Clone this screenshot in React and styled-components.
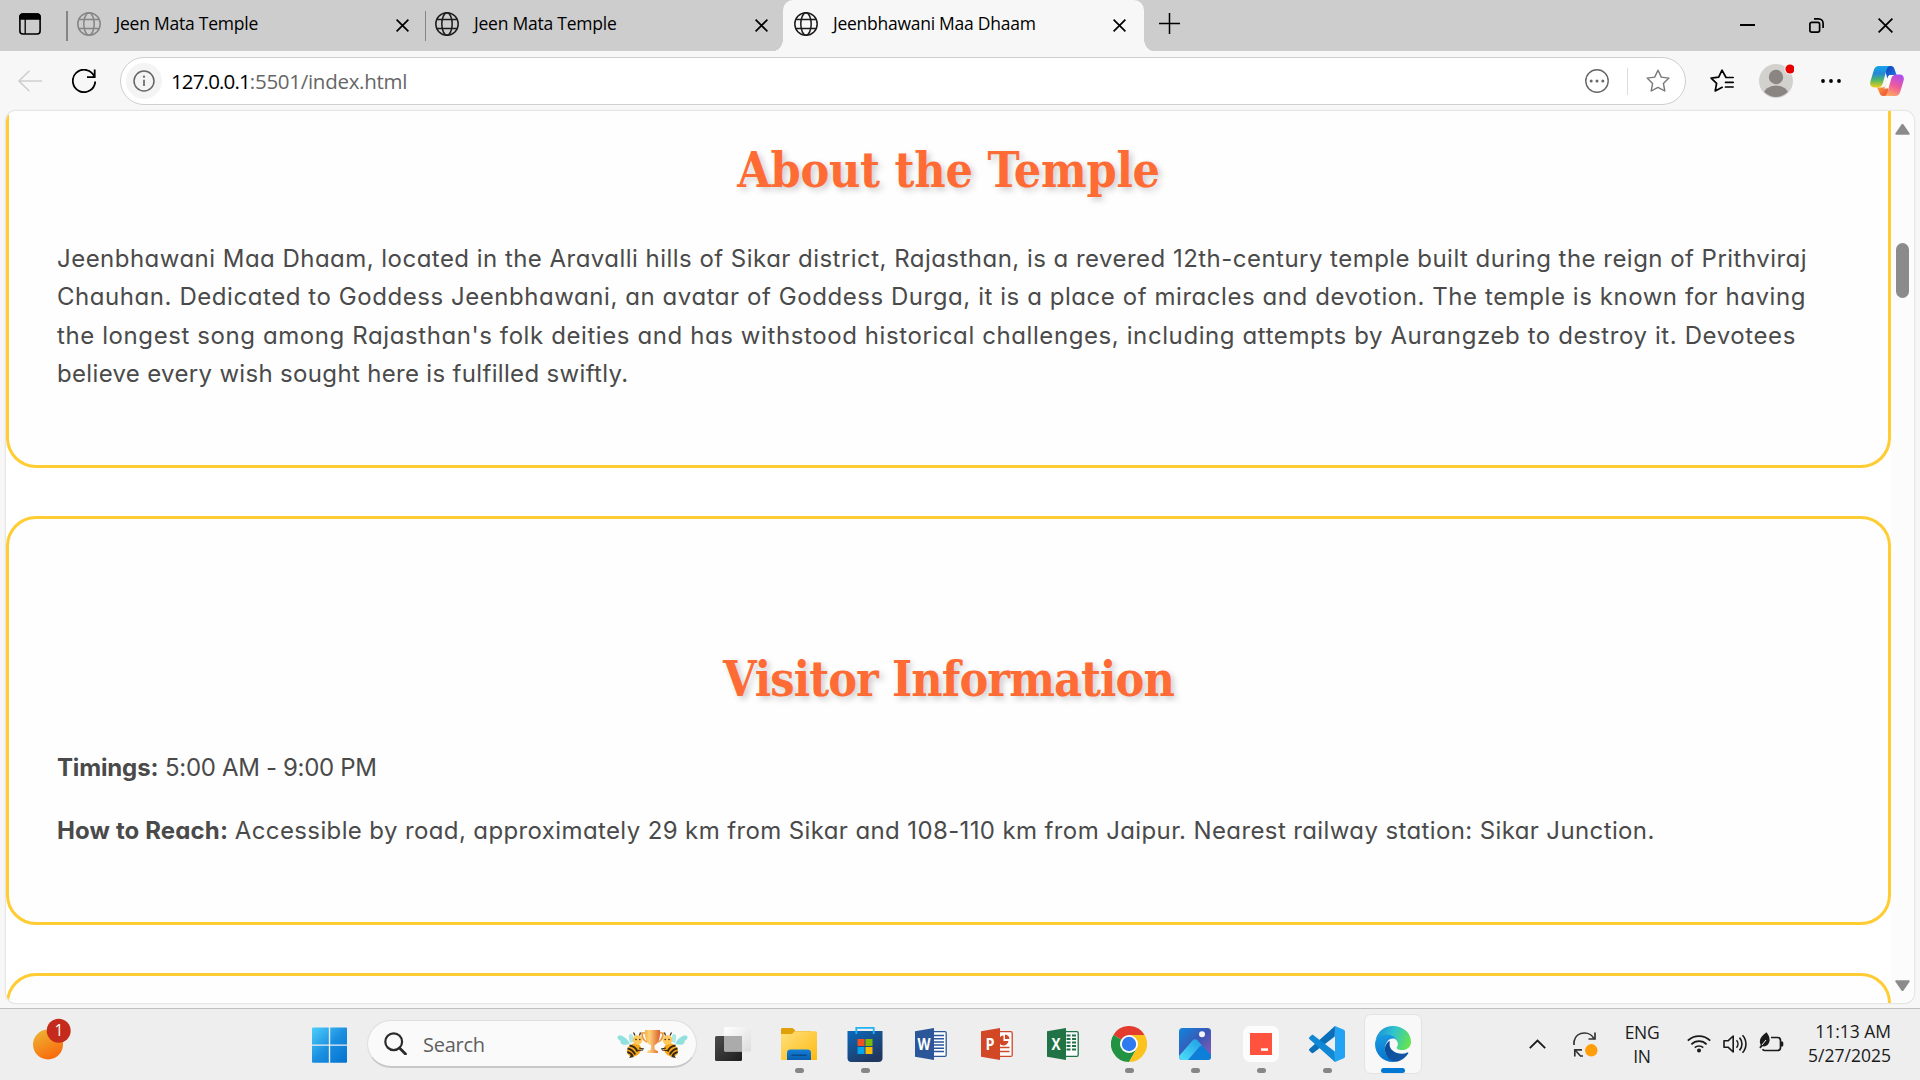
import React from "react";
import styled, { createGlobalStyle, css } from "styled-components";

const UI = `"Open Sans", "Noto Sans", sans-serif`;

const Global = createGlobalStyle`
  *, *::before, *::after { box-sizing: border-box; }
  html, body { margin: 0; padding: 0; background: #eee; overflow: hidden; }
  svg { display: block; flex: none; }
`;

const Screen = styled.div`
  width: 1920px;
  height: 1080px;
  display: flex;
  flex-direction: column;
  overflow: hidden;
  background: #f7f7f7;
  font-family: ${UI};
  color: #000;
`;

const Run = styled.span`
  display: inline-block;
  white-space: pre;
  letter-spacing: ${(p) => p.$ls || 0}px;
`;

/* ---------- tab strip ---------- */
const TabStrip = styled.header`
  height: 51px;
  flex: none;
  display: flex;
  background: #cdcdcd;
`;
const Workspaces = styled.div`
  width: 66px;
  padding: 13px 0 0 19px;
`;
const Tab = styled.div`
  position: relative;
  width: ${(p) => (p.$active ? 361 : 358.5)}px;
  height: 51px;
  display: flex;
  align-items: center;
  padding: 0 ${(p) => (p.$active ? 18 : 15.5)}px 3px ${(p) => (p.$active ? 11 : 9)}px;
  font-size: 17.5px;
  ${(p) =>
    p.$active
      ? css`
          background: #f7f7f7;
          border-radius: 10px 10px 0 0;
          &::before,
          &::after {
            content: "";
            position: absolute;
            bottom: 0;
            width: 9px;
            height: 12px;
          }
          &::before {
            right: 100%;
            background: radial-gradient(ellipse 9px 12px at 0 0, #cdcdcd 97%, #f7f7f7 100%);
          }
          &::after {
            left: 100%;
            background: radial-gradient(ellipse 9px 12px at 100% 0, #cdcdcd 97%, #f7f7f7 100%);
          }
        `
      : css`
          &::before {
            content: "";
            width: 1.5px;
            height: 30px;
            margin: 4px 9px 0 -9px;
            background: #858585;
          }
        `}
`;
const TabTitle = styled.div`
  flex: 1;
  margin: -2px 0 0 15px;
  line-height: 24px;
`;
const CloseMark = styled.div`
  padding-top: 2px;
`;
const NewTab = styled.div`
  padding: 13px 0 0 15px;
`;
const WindowButtons = styled.div`
  margin-left: auto;
  display: flex;
  padding-top: 18px;
  padding-right: 27px;
  gap: 54px;
`;

/* ---------- toolbar ---------- */
const Toolbar = styled.div`
  height: 60px;
  flex: none;
  display: flex;
  align-items: center;
`;
const Slot = styled.div`
  width: ${(p) => p.$w}px;
  margin-left: ${(p) => p.$ml || 0}px;
  display: flex;
  justify-content: center;
`;
const Address = styled.div`
  width: 1566px;
  height: 48px;
  margin-left: 12px;
  display: flex;
  align-items: center;
  padding: 0 15.5px 0 5px;
  background: #fff;
  border: 1.4px solid #cfcfcf;
  border-radius: 24px;
  font-size: 20.5px;
`;
const InfoBadge = styled.div`
  width: 36px;
  height: 36px;
  display: flex;
  align-items: center;
  justify-content: center;
  border-radius: 50%;
  background: #f4f4f4;
  margin-right: 9px;
`;
const Url = styled.div`
  flex: 1;
  line-height: 30px;
  color: #666;
  b { font-weight: 400; color: #000; }
`;
const AddressRule = styled.div`
  width: 1px;
  height: 27px;
  margin: 0 18px 0 18px;
  background: #dcdcdc;
`;

/* ---------- page ---------- */
const Viewport = styled.main`
  width: 1908px;
  height: 892px;
  flex: none;
  margin: 0 6px;
  display: flex;
  overflow: hidden;
  background: #fff;
  border-radius: 10px;
  box-shadow: 0 0 0 1.2px #e6e6e6;
`;
const Cards = styled.div`
  width: 1885px;
  display: flex;
  flex-direction: column;
  gap: 48px;
`;
const Card = styled.section`
  flex: none;
  height: ${(p) => p.$h}px;
  padding: ${(p) => p.$pt}px 48px 0;
  border: 3px solid #ffcc33;
  border-radius: 30px;
  background: #fefefe;
  ${(p) => p.$cut && "border-top: 0; border-top-left-radius: 0; border-top-right-radius: 0;"}
`;
const Heading = styled.h2`
  margin: 0 0 40px;
  height: 60px;
  text-align: center;
  font: 700 48px/60px "DejaVu Serif Condensed", "DejaVu Serif", serif;
  color: #ff6b35;
  text-shadow: 3px 3px 6px rgba(0, 0, 0, 0.2);
`;
const Paragraph = styled.p`
  margin: 0 0 24.6px;
  font-family: Inter, sans-serif;
  font-size: 24px;
  line-height: 38.4px;
  font-feature-settings: "cv11";
  color: #4a4a4a;
  b { font-weight: 700; }
`;
const Scrollbar = styled.div`
  width: 23px;
  display: flex;
  flex-direction: column;
  align-items: center;
  padding: 13px 0 12px;
  background: #fcfcfc;
`;
const Thumb = styled.div`
  width: 13px;
  height: 55px;
  margin: 108px 0 auto;
  border-radius: 7px;
  background: #8b8b8b;
`;

/* ---------- taskbar ---------- */
const Taskbar = styled.footer`
  height: 72px;
  flex: none;
  margin-top: 5px;
  display: flex;
  background: #eee;
  border-top: 1.5px solid #bfbfbf;
`;
const Widget = styled.div`
  width: 312px;
  padding: 9px 0 0 33px;
`;
const StartButton = styled.div`
  padding-top: 18px;
`;
const Search = styled.div`
  width: 330px;
  height: 48px;
  margin: 11px 0 0 19px;
  display: flex;
  align-items: center;
  padding: 0 8px 0 16px;
  background: #fafafa;
  border: 1.5px solid #dedede;
  border-bottom: 2px solid #c8c8c8;
  border-radius: 24px;
  font-size: 20px;
  color: #5f5f5f;
`;
const SearchLabel = styled.div`
  flex: 1;
  margin: 2px 0 0 16px;
  line-height: 30px;
`;
const Apps = styled.div`
  display: flex;
  margin-left: 3px;
  padding-top: 5px;
`;
const AppCell = styled.div`
  width: 66px;
  height: 60px;
  display: flex;
  justify-content: center;
`;
const AppTile = styled.div`
  width: 58px;
  height: 60px;
  display: flex;
  flex-direction: column;
  align-items: center;
  padding-top: ${(p) => (p.$active ? 11 : 12)}px;
  ${(p) => p.$active && "background:#f8f8f8;border:1.5px solid #e3e3e3;border-radius:7px;"}
`;
const Running = styled.div`
  width: ${(p) => (p.$active ? 24 : 9)}px;
  height: 5px;
  margin-top: 6px;
  border-radius: 3px;
  background: ${(p) => (p.$active ? "#0078d4" : "#868686")};
`;
const Tray = styled.div`
  margin-left: auto;
  display: flex;
  align-items: flex-start;
  padding-right: 29px;
  font-size: 17.5px;
  line-height: 24px;
  color: #1a1a1a;
`;
const TrayIcon = styled.div`
  width: ${(p) => p.$w}px;
  padding-top: ${(p) => p.$pt}px;
`;
const Stack = styled.div`
  width: ${(p) => p.$w}px;
  margin-right: ${(p) => p.$mr || 0}px;
  padding-top: ${(p) => p.$pt}px;
  display: flex;
  flex-direction: column;
  align-items: ${(p) => p.$align};
`;

/* ---------- icons ---------- */
const Globe = ({ color }) => (
  <svg width="24" height="24" viewBox="0 0 24 24" fill="none" stroke={color} strokeWidth="1.5">
    <circle cx="12" cy="12" r="11.2" />
    <ellipse cx="12" cy="12" rx="5.2" ry="11.2" />
    <path d="M1.6 7.6h20.8M1.6 16.4h20.8" />
  </svg>
);
const Cross = ({ size = 13, w = 1.7 }) => (
  <svg width={size} height={size} viewBox={`0 0 ${size} ${size}`} stroke="#000" strokeWidth={w}>
    <path d={`M.6 .6L${size - 0.6} ${size - 0.6}M${size - 0.6} .6L.6 ${size - 0.6}`} />
  </svg>
);
const STAR = "M12 1.2l3.3 6.9 7.6 1-5.5 5.3 1.4 7.6L12 18.4l-6.8 3.6 1.4-7.6L1.1 9.1l7.6-1z";

const Copilot = () => (
  <svg width="34" height="30" viewBox="0 0 34 30">
    <defs>
      <linearGradient id="cpA" x1="0" y1="0" x2="0" y2="1">
        <stop offset="0" stopColor="#12a5e8" /><stop offset=".35" stopColor="#2389d8" />
        <stop offset=".65" stopColor="#4fb768" /><stop offset="1" stopColor="#f5cd14" />
      </linearGradient>
      <linearGradient id="cpB" x1=".7" y1="0" x2=".3" y2="1">
        <stop offset="0" stopColor="#b04df0" /><stop offset=".5" stopColor="#ee5a9c" /><stop offset="1" stopColor="#ffa961" />
      </linearGradient>
      <linearGradient id="cpC" x1="0" y1="0" x2="1" y2="1">
        <stop offset="0" stopColor="#1739b8" /><stop offset="1" stopColor="#1b7fe8" />
      </linearGradient>
      <linearGradient id="cpD" x1="0" y1="0" x2="1" y2="1">
        <stop offset="0" stopColor="#ffb03a" /><stop offset="1" stopColor="#e8403a" />
      </linearGradient>
    </defs>
    <path d="M14 0h6.500c3 0 3.600 1.500 4.500 4.500l1.500 4.500h-5c-2.500 0-3.500 1-4.200 3.500z" fill="url(#cpC)" />
    <path d="M7 21.500h5.500c2.500 0 3.500-1 4.200-3.500L20 30h-6.500c-2.500 0-3.600-1.500-4.500-4.500z" fill="url(#cpD)" />
    <path d="M9 0h11.500c-2 0-3.200 1.300-4 4L13 16.500c-1 3.500-2.200 5-5.500 5H4.200C.8 21.500-.4 18.800.4 15.400L3.700 4.500C4.600 1.500 6 0 9 0z" fill="url(#cpA)" />
    <path d="M25 30H13.500c2 0 3.200-1.300 4-4L21 13.500c1-3.500 2.200-5 5.500-5h3.300c3.400 0 4.600 2.700 3.800 6.100l-3.300 10.900c-.9 3-2.300 4.500-5.300 4.500z" fill="url(#cpB)" />
    <path d="M19.800 9h4.500c-2.300.6-3.200 2-3.900 4.500l-2.200 8c-.4 1-.9 1-1.600 1h-3.200c1.500-.6 2.400-2 3.100-4.500l1.700-6.500c.4-1.500.8-2.200 1.600-2.500z" fill="#fff" />
  </svg>
);

const Bee = ({ flip }) => (
  <g transform={flip ? "translate(71 0) scale(-1 1)" : undefined}>
    <path d="M12 13C6 5 1 6 .5 8c-.4 2 2 3 3 4-.6 3 3 5 9 3z" fill="#8fe0df" />
    <path d="M13 14c-2-7-1-9 1-9s3 4 2 8z" fill="#a9e9e8" />
    <ellipse cx="17" cy="21" rx="7.500" ry="6.200" transform="rotate(-35 17 21)" fill="#f5a81c" />
    <path d="M12 29l2-3 3 2-5 1z" fill="#3a2a18" />
    <path d="M12.500 16.500c3 .3 6.500 2.600 8 6M10.500 19.500c3 .3 6.500 3 7.600 6M10.300 23c2.500.5 4.500 2.200 5.400 4.300" stroke="#3a2614" strokeWidth="2" fill="none" />
    <circle cx="20.500" cy="11" r="4.800" fill="#ffc95c" />
    <circle cx="19" cy="10.500" r=".8" fill="#3a2614" />
    <circle cx="22.800" cy="10.500" r=".8" fill="#3a2614" />
    <path d="M18 6.500l-1.500-3M22.500 6.500l1-3M22 19l5 1M21 21.500l5-.5" stroke="#3a2614" strokeWidth="1.200" />
  </g>
);
const Trophy = () => (
  <svg width="71" height="30" viewBox="0 0 71 30">
    <defs>
      <linearGradient id="cup" x1="0" x2="1"><stop offset="0" stopColor="#f6b13e" /><stop offset=".3" stopColor="#ffd07a" /><stop offset="1" stopColor="#d9602a" /></linearGradient>
    </defs>
    <Bee /><Bee flip />
    <path d="M28 4h-3c0 5 2 8 5 9M43 4h3c0 5-2 8-5 9" fill="none" stroke="#e9963a" strokeWidth="1.700" />
    <path d="M28 1h15c.6 8-1.800 14-5.500 15.200v4l3.500 2V24H30.500v-1.800l3.500-2v-4C29.800 15 27.400 9 28 1z" fill="url(#cup)" />
  </svg>
);

const TaskView = () => (
  <svg width="36" height="36" viewBox="0 0 36 36">
    <defs>
      <linearGradient id="tvA" x1="0" y1="0" x2="1" y2="1"><stop offset="0" stopColor="#4c4c4c" /><stop offset="1" stopColor="#1d1d1d" /></linearGradient>
      <linearGradient id="tvB" x1="0" y1="0" x2="1" y2="1"><stop offset="0" stopColor="#fff" /><stop offset="1" stopColor="#dcdcdc" /></linearGradient>
    </defs>
    <rect x="0" y="10" width="27" height="25" rx="1.500" fill="url(#tvA)" />
    <rect x="9" y="1" width="27" height="24.500" rx="1.500" fill="url(#tvB)" />
    <path d="M9 10h18v15.500H10.500A1.500 1.500 0 0 1 9 24z" fill="#ababab" />
  </svg>
);
const Explorer = () => (
  <svg width="36" height="36" viewBox="0 0 36 36">
    <defs>
      <linearGradient id="fx" x1="0" y1="0" x2="1" y2="1"><stop offset="0" stopColor="#ffe17c" /><stop offset="1" stopColor="#fdb913" /></linearGradient>
      <linearGradient id="fy" x1="0" y1="0" x2="0" y2="1"><stop offset="0" stopColor="#1180d8" /><stop offset="1" stopColor="#0a5fae" /></linearGradient>
    </defs>
    <path d="M0 3.500C0 2.600.6 2 1.500 2h9c1.200 0 1.800.3 2.500 1.200L14.500 5H30v6H0z" fill="#e0a008" />
    <path d="M0 8h9.500c1.200 0 2-.3 2.800-1.200l1.400-1.600H34.500c.9 0 1.500.6 1.500 1.500V34H0z" fill="url(#fx)" />
    <path d="M6 34V27c0-2.400 1.300-3.500 3.500-3.500h17c2.200 0 3.500 1.100 3.500 3.500v7z" fill="url(#fy)" />
    <path d="M11 29.300h14" stroke="#0a4a8c" strokeWidth="1.600" strokeLinecap="round" />
  </svg>
);
const Store = () => (
  <svg width="36" height="36" viewBox="0 0 36 36">
    <defs><linearGradient id="st" x1="0" y1="0" x2=".6" y2="1"><stop offset="0" stopColor="#0b69bd" /><stop offset="1" stopColor="#21375f" /></linearGradient></defs>
    <path d="M.5 5h35v27c0 2.600-1.400 4-4 4h-27c-2.600 0-4-1.400-4-4z" fill="url(#st)" />
    <path d="M9.300 8V1.900h17.400V8" fill="none" stroke="#22b4f2" strokeWidth="1.800" />
    <path d="M10.500 13h7v7h-7z" fill="#f25022" /><path d="M18.500 13h7v7h-7z" fill="#7fba00" />
    <path d="M10.500 21h7v7h-7z" fill="#00a4ef" /><path d="M18.500 21h7v7h-7z" fill="#ffb900" />
  </svg>
);
const OfficeLetter = styled.text`
  font: 700 16.500px "Open Sans", sans-serif;
  fill: #fff;
`;
const Office = ({ color, letter, children }) => (
  <svg width="36" height="36" viewBox="0 0 36 36">
    <rect x="17" y="5.700" width="16.200" height="24.600" rx="1.300" fill="#fff" stroke={color} strokeWidth="1.300" />
    {children}
    <path d="M2 5.300L21 2v32L2 30.700z" fill={color} />
    <OfficeLetter x="11" y="23.800" textAnchor="middle" textLength={letter === "W" ? 13 : 9} lengthAdjust="spacingAndGlyphs">{letter}</OfficeLetter>
  </svg>
);
const Chrome = () => (
  <svg width="36" height="36" viewBox="0 0 36 36">
    <path d="M18 18L2.400 9A18 18 0 0 1 33.600 9z" fill="#e33b2e" />
    <path d="M18 18L2.400 9A18 18 0 0 0 18 36l7.800-13.500z" fill="#229342" />
    <path d="M18 9h15.600A18 18 0 0 1 18 36l7.800-13.500z" fill="#fcc31e" />
    <circle cx="18" cy="18" r="9" fill="#fff" />
    <circle cx="18" cy="18" r="7.200" fill="#2f7af0" />
  </svg>
);
const Photos = () => (
  <svg width="36" height="36" viewBox="0 0 36 36">
    <defs>
      <linearGradient id="phA" x1="0" y1="0" x2="1" y2="1"><stop offset="0" stopColor="#0f86dd" /><stop offset=".5" stopColor="#3c57b4" /><stop offset="1" stopColor="#9a5bb8" /></linearGradient>
      <linearGradient id="phB" x1="0" y1="1" x2="1" y2="0"><stop offset="0" stopColor="#4fe0f8" /><stop offset="1" stopColor="#1d9be6" /></linearGradient>
      <clipPath id="phC"><rect x="2" y="2" width="32" height="32" rx="3.500" /></clipPath>
    </defs>
    <g clipPath="url(#phC)">
      <rect x="2" y="2" width="32" height="32" fill="url(#phA)" />
      <path d="M11 34l12-13.500c1-1 2.200-1 3.200 0L36 31v5H9z" fill="#0d7fd8" />
      <path d="M2 30l13.500-15.500c1.600-1.700 3.600-1.700 5.200 0l4.800 5.300c-1-.6-2-.3-2.800.6L11 34H2z" fill="url(#phB)" />
    </g>
    <circle cx="25" cy="8.200" r="3" fill="#f4f4fa" />
  </svg>
);
const RedApp = () => (
  <svg width="36" height="36" viewBox="0 0 36 36">
    <rect width="36" height="36" rx="7" fill="#fcfcfc" />
    <path d="M7 7h22v22H7z" fill="#ff523f" />
    <path d="M18 22.300h7v2.500h-7z" fill="#fff" />
  </svg>
);
const VsCode = () => (
  <svg width="36" height="36" viewBox="0 0 36 36">
    <path d="M26 0l-.2 10.500L4.500 26.800c-.7.500-1.400.5-2 0L.6 25c-.8-.7-.8-1.600 0-2.300z" fill="#0a6fb8" />
    <path d="M26 36l-.2-10.500L4.500 9.200c-.7-.5-1.400-.5-2 0L.6 11c-.8.7-.8 1.600 0 2.300z" fill="#1088d6" />
    <path d="M26 0l8.800 3.800c.8.400 1.200 1 1.200 1.800v24.800c0 .8-.4 1.400-1.200 1.800L26 36z" fill="#23a3f3" />
  </svg>
);
const Edge = () => (
  <svg width="36" height="36" viewBox="0 0 36 36">
    <defs>
      <linearGradient id="egA" x1="0" y1=".3" x2="1" y2=".6"><stop offset="0" stopColor="#1c90d8" /><stop offset=".45" stopColor="#2fc3cf" /><stop offset="1" stopColor="#66e44c" /></linearGradient>
      <linearGradient id="egB" x1=".2" y1="0" x2=".4" y2="1"><stop offset="0" stopColor="#1b9de2" /><stop offset="1" stopColor="#0672cf" /></linearGradient>
      <linearGradient id="egC" x1="0" y1="0" x2="1" y2="1"><stop offset="0" stopColor="#0b4a94" /><stop offset="1" stopColor="#1259a8" /></linearGradient>
    </defs>
    <path d="M.6 14.500C2 6 9 0 18 0c10 0 18 7 18 15.500 0 5.500-4 8.600-8.600 8.600-3.400 0-5.700-1-5.700-2.400 0-.8 1.200-1.400 1.200-3.700 0-3.800-4.200-8-10.400-8C7 10 2.500 12 .6 14.500z" fill="url(#egA)" />
    <path d="M0 18c0-6 6-9.500 11.500-9.500 6.500 0 11.400 4.500 11.400 9 0-3-2.200-5-5-5-4.500 0-8 5-8 10.500 0 6 4 11.500 11.500 12.600-1.100.3-2.300.4-3.400.4C7.800 36 0 28 0 18z" fill="url(#egB)" />
    <path d="M14.500 14.800c-3 2-4.600 5.200-4.600 8.600 0 6.600 5.200 12.300 12.100 12.300 4.500-1.200 8.800-4.200 11.200-8.300.4-.7-.2-1.200-.8-.9-1.600.8-3.500 1.200-5.500 1.200-6.700 0-12.300-4-12.300-9.200 0-1.400.3-2.600-.1-3.700z" fill="url(#egC)" />
  </svg>
);

const APPS = [
  { icon: <TaskView /> },
  { icon: <Explorer />, running: true },
  { icon: <Store />, running: true },
  { icon: <Office color="#2b579a" letter="W"><path d="M21 9.500h10M21 12.700h10M21 15.900h10M21 19.100h10M21 22.300h10M21 25.500h10" stroke="#2b579a" strokeWidth="1.500" /></Office> },
  { icon: <Office color="#d24726" letter="P"><path d="M21 21.500h9.500M21 25.500h9.500" stroke="#d24726" strokeWidth="1.500" /><path d="M24.500 9.500a5 5 0 1 0 5 5.500h-5z" fill="#d24726" /><path d="M26 8.500a5 5 0 0 1 4.500 4.500H26z" fill="#d24726" /></Office> },
  { icon: <Office color="#217346" letter="X"><path d="M21.500 9.500h4M27 9.500h4M21.500 13h4M27 13h4M21.500 16.500h4M27 16.500h4M21.500 20h4M27 20h4M21.500 23.500h4M27 23.500h4" stroke="#217346" strokeWidth="2.200" /></Office> },
  { icon: <Chrome />, running: true },
  { icon: <Photos />, running: true },
  { icon: <RedApp />, running: true },
  { icon: <VsCode />, running: true },
  { icon: <Edge />, running: true, active: true },
];

const LINES = [
  ["Jeenbhawani Maa Dhaam, located in the Aravalli hills of Sikar district, Rajasthan, is a revered 12th-century temple built during the reign of Prithviraj", 0.47],
  ["Chauhan. Dedicated to Goddess Jeenbhawani, an avatar of Goddess Durga, it is a place of miracles and devotion. The temple is known for having", 0.561],
  ["the longest song among Rajasthan's folk deities and has withstood historical challenges, including attempts by Aurangzeb to destroy it. Devotees", 0.593],
  ["believe every wish sought here is fulfilled swiftly.", 0.329],
];

export default function App() {
  return (
    <Screen>
      <Global />
      <TabStrip>
        <Workspaces>
          <svg width="22" height="22" viewBox="0 0 22 22" fill="none" stroke="#000" strokeWidth="1.600">
            <rect x=".9" y="1" width="20.200" height="20" rx="3" />
            <path d="M6.200 6v15" strokeWidth="1.300" />
            <path d="M1 6V4a3 3 0 0 1 3-3h14a3 3 0 0 1 3 3v2z" fill="#000" />
          </svg>
        </Workspaces>
        <Tab><Globe color="#858585" /><TabTitle><Run $ls={-0.23}>Jeen Mata Temple</Run></TabTitle><CloseMark><Cross /></CloseMark></Tab>
        <Tab><Globe color="#1b1b1b" /><TabTitle><Run $ls={-0.23}>Jeen Mata Temple</Run></TabTitle><CloseMark><Cross /></CloseMark></Tab>
        <Tab $active><Globe color="#1b1b1b" /><TabTitle><Run $ls={-0.26}>Jeenbhawani Maa Dhaam</Run></TabTitle><CloseMark><Cross /></CloseMark></Tab>
        <NewTab>
          <svg width="21" height="21" viewBox="0 0 21 21" stroke="#000" strokeWidth="1.500"><path d="M10.500 0v21M0 10.500h21" /></svg>
        </NewTab>
        <WindowButtons>
          <svg width="15" height="15" viewBox="0 0 15 15"><path d="M0 6h15v2H0z" /></svg>
          <svg width="15" height="15" viewBox="0 0 15 15" fill="none" stroke="#000" strokeWidth="1.700"><rect x=".9" y="4.400" width="9.700" height="9.700" rx="1.800" /><path d="M5 .9h4.600A4.500 4.500 0 0 1 14.100 5.400V10" /></svg>
          <Cross size={15} w={1.8} />
        </WindowButtons>
      </TabStrip>

      <Toolbar>
        <Slot $w={60}>
          <svg width="24" height="22" viewBox="0 0 24 22" fill="none" stroke="#cfcfcf" strokeWidth="1.600"><path d="M24 11H1M11.500 .8L1 11l10.500 10.200" /></svg>
        </Slot>
        <Slot $w={48}>
          <svg width="24" height="24" viewBox="0 0 24 24" fill="none" stroke="#000" strokeWidth="1.800"><path d="M22.500 8A11.200 11.200 0 1 0 23.200 12.500M22.700 .5V8.200H15" /></svg>
        </Slot>
        <Address>
          <InfoBadge>
            <svg width="22" height="22" viewBox="0 0 22 22" fill="none" stroke="#666" strokeWidth="1.500"><circle cx="11" cy="11" r="10" /><path d="M11 9.700v6.300" strokeWidth="1.700" /><circle cx="11" cy="6.700" r="1.100" fill="#666" stroke="none" /></svg>
          </InfoBadge>
          <Url><b><Run $ls={-0.85}>127.0.0.1</Run></b><Run $ls={-0.28}>:5501/index.html</Run></Url>
          <svg width="24" height="24" viewBox="0 0 24 24" fill="none" stroke="#666" strokeWidth="1.400"><circle cx="12" cy="12" r="11.200" /><g fill="#666" stroke="none"><circle cx="6.200" cy="12" r="1.500" /><circle cx="12" cy="12" r="1.500" /><circle cx="17.800" cy="12" r="1.500" /></g></svg>
          <AddressRule />
          <svg width="24" height="24" viewBox="0 0 24 24" fill="none" stroke="#777" strokeWidth="1.400" strokeLinejoin="round"><path d={STAR} /></svg>
        </Address>
        <Slot $w={54} $ml={9}>
          <svg width="24" height="24" viewBox="0 0 24 24" fill="none" stroke="#000" strokeWidth="1.700" strokeLinejoin="round" strokeLinecap="round"><path d="M23.200 8.500H16L12 1.200 8.700 8.100l-7.600 1 5.500 5.300L5.200 22l7-3.700M15.500 13.300h7.700M15.500 18h7.700" /></svg>
        </Slot>
        <Slot $w={54}>
          <svg width="36" height="36" viewBox="0 0 36 36">
            <defs><clipPath id="av"><circle cx="18" cy="18" r="16" /></clipPath></defs>
            <circle cx="18" cy="18" r="17" fill="#d3d1ce" />
            <g clipPath="url(#av)" fill="#8a8583"><circle cx="18" cy="14" r="7.200" /><ellipse cx="18" cy="32" rx="12.500" ry="9.500" /></g>
            <circle cx="32" cy="6" r="5.600" fill="#f7f7f7" /><circle cx="32" cy="6" r="4.600" fill="#e60000" />
          </svg>
        </Slot>
        <Slot $w={56}>
          <svg width="20" height="4" viewBox="0 0 20 4"><circle cx="2" cy="2" r="1.900" /><circle cx="10" cy="2" r="1.900" /><circle cx="18" cy="2" r="1.900" /></svg>
        </Slot>
        <Slot $w={56}><Copilot /></Slot>
      </Toolbar>

      <Viewport>
        <Cards>
          <Card $cut $h={357} $pt={29}>
            <Heading><Run $ls={-0.25}>About the Temple</Run></Heading>
            <Paragraph>
              {LINES.map(([text, spacing]) => (
                <React.Fragment key={text}><Run $ls={spacing}>{text}</Run><br /></React.Fragment>
              ))}
            </Paragraph>
          </Card>
          <Card $h={409} $pt={130}>
            <Heading><Run $ls={-0.92}>Visitor Information</Run></Heading>
            <Paragraph><b><Run $ls={-0.15}>Timings:</Run></b> <Run $ls={-0.33}>5:00 AM - 9:00 PM</Run></Paragraph>
            <Paragraph><b><Run $ls={0.13}>How to Reach:</Run></b> <Run $ls={0.382}>Accessible by road, approximately 29 km from Sikar and 108-110 km from Jaipur. Nearest railway station: Sikar Junction.</Run></Paragraph>
          </Card>
          <Card $h={200} $pt={0} />
        </Cards>
        <Scrollbar>
          <svg width="15" height="11" viewBox="0 0 15 11" fill="#8b8b8b"><path d="M6.300 .7a1.500 1.500 0 0 1 2.400 0l5.700 8.300c.6.900.1 1.800-.9 1.800H1.500c-1 0-1.500-.9-.9-1.800z" /></svg>
          <Thumb />
          <svg width="15" height="11" viewBox="0 0 15 11" fill="#8b8b8b"><path d="M6.300 10.300a1.500 1.500 0 0 0 2.400 0l5.700-8.300c.6-.9.1-1.800-.9-1.800H1.500c-1 0-1.500.9-.9 1.800z" /></svg>
        </Scrollbar>
      </Viewport>

      <Taskbar>
        <Widget>
          <svg width="38" height="42" viewBox="0 0 38 42">
            <defs><linearGradient id="sun" x1=".1" y1="0" x2=".6" y2="1"><stop offset="0" stopColor="#edb735" /><stop offset="1" stopColor="#f96a0c" /></linearGradient></defs>
            <circle cx="15" cy="26.500" r="15" fill="url(#sun)" />
            <circle cx="25.700" cy="12.800" r="12" fill="#c42b1c" />
            <text x="26" y="18" textAnchor="middle" fontSize="15.500" fontFamily="Open Sans" fill="#fff">1</text>
          </svg>
        </Widget>
        <StartButton>
          <svg width="36" height="36" viewBox="0 0 36 36">
            <defs><linearGradient id="win" gradientUnits="userSpaceOnUse" x1="0" y1="0" x2="36" y2="36"><stop offset="0" stopColor="#4fd0fb" /><stop offset=".5" stopColor="#1b8fe0" /><stop offset="1" stopColor="#0271cf" /></linearGradient></defs>
            <path d="M0 1.500a1 1 0 0 1 1-1h15.800v17H0zM18.200 .5H34a1 1 0 0 1 1 1v16H18.200zM0 18.800h16.800v17H1a1 1 0 0 1-1-1zM18.200 18.800H35v16a1 1 0 0 1-1 1H18.200z" fill="url(#win)" />
          </svg>
        </StartButton>
        <Search>
          <svg width="23" height="23" viewBox="0 0 23 23" fill="none" stroke="#2b2b2b" strokeWidth="2.200"><circle cx="9.700" cy="9.700" r="8.400" /><path d="M15.500 16l6 6" strokeWidth="2.800" strokeLinecap="round" /></svg>
          <SearchLabel><Run $ls={-0.25}>Search</Run></SearchLabel>
          <Trophy />
        </Search>
        <Apps>
          {APPS.map((a, i) => (
            <AppCell key={i}><AppTile $active={a.active}>{a.icon}{a.running && <Running $active={a.active} />}</AppTile></AppCell>
          ))}
        </Apps>
        <Tray>
          <TrayIcon $w={44} $pt={30}>
            <svg width="17" height="10" viewBox="0 0 17 10" fill="none" stroke="#1a1a1a" strokeWidth="1.800"><path d="M.8 9.200L8.500 1.500l7.700 7.700" /></svg>
          </TrayIcon>
          <TrayIcon $w={45} $pt={23}>
            <svg width="25" height="25" viewBox="0 0 25 25" fill="none" stroke="#333" strokeWidth="1.700"><path d="M1 13V9.500C2 4 6.500 1 11.500 1c4 0 8 2.500 9.500 6M22 .5V7h-6.500M10 24H7.500L2 18M1.800 24.500V17.800H9" /><circle cx="18.300" cy="18.300" r="6.200" fill="#ff9d0a" stroke="none" /></svg>
          </TrayIcon>
          <Stack $w={48} $mr={21} $pt={11.4} $align="center"><Run $ls={-0.3}>ENG</Run><Run $ls={-0.2}>IN</Run></Stack>
          <TrayIcon $w={36} $pt={25}>
            <svg width="24" height="19" viewBox="0 0 24 19" fill="none" stroke="#1a1a1a" strokeWidth="1.700"><path d="M.8 6.700a15.800 15.800 0 0 1 22.400 0M4.400 10.300a10.800 10.800 0 0 1 15.200 0M7.800 13.700a6 6 0 0 1 8.400 0" /><circle cx="12" cy="16.400" r="2" fill="#1a1a1a" stroke="none" /></svg>
          </TrayIcon>
          <TrayIcon $w={36} $pt={25}>
            <svg width="24" height="20" viewBox="0 0 24 20" fill="none" stroke="#1a1a1a" strokeWidth="1.600" strokeLinejoin="round"><path d="M1 6.800h4L10.200 2v16L5 13.200H1zM13.500 6.300a5.500 5.500 0 0 1 0 7.400M16.500 3.600a9.500 9.500 0 0 1 0 12.800M19.500 1.200a13 13 0 0 1 0 17.600" /></svg>
          </TrayIcon>
          <TrayIcon $w={48} $pt={23}>
            <svg width="25" height="22" viewBox="0 0 25 22">
              <path d="M12 5.500h6.500a3 3 0 0 1 3 3v7a3 3 0 0 1-3 3H6a3 3 0 0 1-2.500-1.300" fill="none" stroke="#1a1a1a" strokeWidth="1.700" />
              <path d="M22 9.500h1c.8 0 1.300.6 1.300 1.300v2.400c0 .7-.5 1.300-1.300 1.300h-1zM7.500 .3c2.500 3 3.500 6 3 9-.6 3.500-3.500 5.600-7 5L1.500 16.500.3 15.300l1.500-2C-.8 8 2 4.500 7.500 .3z" fill="#1a1a1a" />
              <path d="M3 13l4-5" stroke="#eee" strokeWidth="1" />
            </svg>
          </TrayIcon>
          <Stack $w={84} $pt={9.6} $align="flex-end"><Run $ls={-0.03}>11:13 AM</Run><Run $ls={0}>5/27/2025</Run></Stack>
        </Tray>
      </Taskbar>
    </Screen>
  );
}
